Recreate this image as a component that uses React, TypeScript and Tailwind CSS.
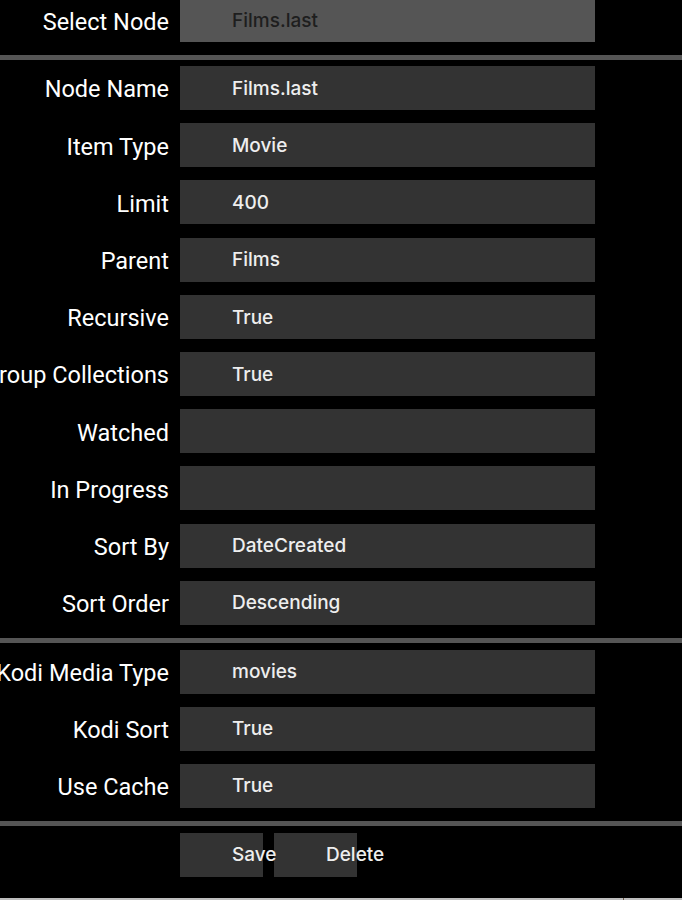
import * as React from "react";

const LABEL_FONT = { fontFamily: "Roboto, 'Liberation Sans', sans-serif" };
const VALUE_FONT = { fontFamily: "Inter, 'Open Sans', sans-serif" };

type Row = { label: string; value: string };

const mainRows: Row[] = [
  { label: "Node Name", value: "Films.last" },
  { label: "Item Type", value: "Movie" },
  { label: "Limit", value: "400" },
  { label: "Parent", value: "Films" },
  { label: "Recursive", value: "True" },
  { label: "Group Collections", value: "True" },
  { label: "Watched", value: "" },
  { label: "In Progress", value: "" },
  { label: "Sort By", value: "DateCreated" },
  { label: "Sort Order", value: "Descending" },
];

const kodiRows: Row[] = [
  { label: "Kodi Media Type", value: "movies" },
  { label: "Kodi Sort", value: "True" },
  { label: "Use Cache", value: "True" },
];

function Label({ text }: { text: string }) {
  return (
    <div
      className="w-[170px] shrink-0 flex justify-end pr-[1px] pt-[4px] text-[23.5px] text-white whitespace-nowrap"
      style={LABEL_FONT}
    >
      <span>{text}</span>
    </div>
  );
}

function FieldRow({ label, value }: Row) {
  return (
    <div className="flex items-center gap-[10px] h-[44px]">
      <Label text={label} />
      <div
        className="w-[415px] h-full bg-[#333333] flex items-center pl-[52px] pt-[2px] text-[19px] font-medium text-[#eeeeee]"
        style={VALUE_FONT}
      >
        {value}
      </div>
    </div>
  );
}

function Divider() {
  return <div className="h-[5px] w-full bg-[#555555]" />;
}

export default function App() {
  return (
    <main className="w-[682px] h-[900px] bg-black overflow-hidden flex flex-col">
      {/* select node */}
      <div className="flex items-center gap-[10px] h-[42px]">
        <Label text="Select Node" />
        <div
          className="w-[415px] h-full bg-[#555555] flex items-center pl-[52px] text-[19px] font-medium text-[#1e1e1e]"
          style={VALUE_FONT}
        >
          Films.last
        </div>
      </div>

      <div className="mt-[13px]">
        <Divider />
      </div>

      <div className="mt-[6px] flex flex-col gap-[13.2px]">
        {mainRows.map((r) => (
          <FieldRow key={r.label} {...r} />
        ))}
      </div>

      <div className="mt-[13px]">
        <Divider />
      </div>

      <div className="mt-[7px] flex flex-col gap-[13px]">
        {kodiRows.map((r) => (
          <FieldRow key={r.label} {...r} />
        ))}
      </div>

      <div className="mt-[13px]">
        <Divider />
      </div>

      <div className="mt-[7px] flex items-center gap-[11px] pl-[180px] h-[44px]">
        {["Save", "Delete"].map((b) => (
          <button
            key={b}
            className="w-[83px] h-full bg-[#333333] flex items-center pl-[52px] pt-[2px] text-[19px] font-medium text-[#eeeeee] whitespace-nowrap overflow-visible"
            style={VALUE_FONT}
          >
            <span className="relative z-10">{b}</span>
          </button>
        ))}
      </div>

      <div className="mt-auto h-[2px] w-full bg-[#bdbdbd] flex">
        <div className="ml-[623px] w-[1px] h-full bg-[#6b5a4a]" />
      </div>
    </main>
  );
}
